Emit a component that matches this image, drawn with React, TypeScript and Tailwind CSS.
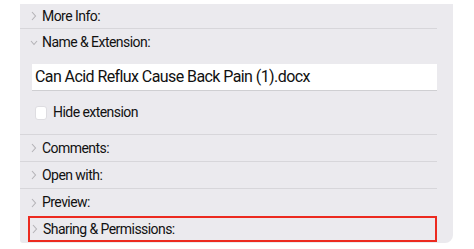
const Chevron = ({ open = false }: { open?: boolean }) => (
  <svg width="8" height="10" viewBox="0 0 8 10" className="shrink-0">
    {open ? (
      <polyline points="1,3 4,6.5 7,3" fill="none" stroke="#b4b3b7" strokeWidth="1.1" />
    ) : (
      <polyline points="2,1 5.5,5 2,9" fill="none" stroke="#b4b3b7" strokeWidth="1.1" />
    )}
  </svg>
);

const Row = ({ label, border = true, open = false, h = "h-[27px]" }: { label: string; border?: boolean; open?: boolean; h?: string }) => (
  <div className={`flex items-center gap-[4px] pl-[10px] ${h} ${border ? "border-b border-[#d7d6da]" : ""}`}>
    <Chevron open={open} />
    <span className="text-[14px] tracking-[-0.55px] text-[#111]">{label}</span>
  </div>
);

export default function App() {
  return (
    <div className="w-[474px] h-[249px] bg-white pt-[4px] pl-[20px] font-['Roboto','Liberation_Sans',Arial,sans-serif]">
      <div className="w-[433px] h-[239px] bg-[#ebeaee] rounded-br-[8px] rounded-bl-[3px] pr-[16px]">
        <Row label="More Info:" h="h-[25px]" />
        <Row label="Name & Extension:" border={false} open />
        <div className="ml-[12px] mt-[8px] h-[27px] bg-white border-b border-[#cfcfd2] flex items-center pl-[3px]">
          <span className="text-[16px] tracking-[-0.58px] text-[#111]">Can Acid Reflux Cause Back Pain (1).docx</span>
        </div>
        <div className="h-[44px] border-b border-[#d7d6da] flex items-center pl-[15px] gap-[6px]">
          <div className="w-[12px] h-[14px] bg-white rounded-[3px] border border-[#dedde1]" />
          <span className="text-[14px] tracking-[-0.55px] text-[#111]">Hide extension</span>
        </div>
        <Row label="Comments:" />
        <Row label="Open with:" />
        <Row label="Preview:" border={false} />
        <div className="ml-[8px] h-[26px] border-2 border-[#ec2a1f] flex items-center gap-[4px] pl-[1px]">
          <Chevron />
          <span className="text-[14px] tracking-[-0.55px] text-[#111]">Sharing &amp; Permissions:</span>
        </div>
      </div>
    </div>
  );
}
